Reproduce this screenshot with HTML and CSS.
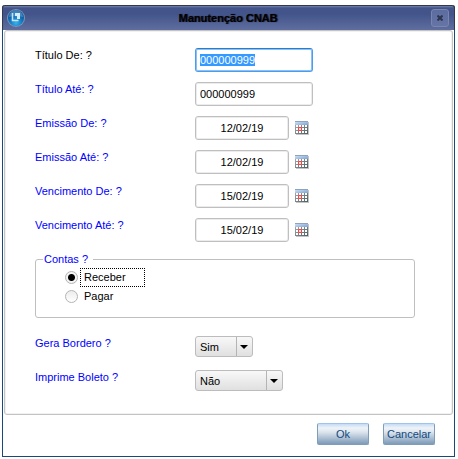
FILE: index.html
```html
<!DOCTYPE html>
<html lang="pt-BR">
<head>
<meta charset="utf-8">
<title>Manutenção CNAB</title>
<link rel="stylesheet" href="styles.css">
</head>
<body>
<svg class="defs" width="0" height="0" aria-hidden="true">
  <defs>
    <linearGradient id="cal-head" x1="0" y1="0" x2="1" y2="1">
      <stop offset="0" stop-color="#d3e6fc"/><stop offset="1" stop-color="#7fa3d0"/>
    </linearGradient>
    <linearGradient id="cal-grid" x1="0" y1="0" x2="1" y2="1">
      <stop offset="0" stop-color="#b4b4b4"/><stop offset="1" stop-color="#4a5e62"/>
    </linearGradient>
    <symbol id="calendar" viewBox="0 0 14 14">
      <path d="M1 1h13v13H1z" fill="#c4c4c4"/>
      <path d="M0 0h13v13H0z" fill="url(#cal-grid)"/>
      <path d="M0 0h13v4H0z" fill="url(#cal-head)"/>
      <path d="M0 0h13v1H0z" fill="#8fa3ba"/>
      <path d="M1 4h2v2H1zM4 4h2v2H4zM7 4h2v2H7zM10 4h2v2h-2zM1 7h2v2H1zM4 7h2v2H4zM7 7h2v2H7zM10 7h2v2h-2zM1 10h2v2H1zM4 10h2v2H4zM7 10h2v2H7zM10 10h2v2h-2z" fill="#fff"/>
      <path d="M3.500 6.500h3v3h-3z" fill="#ffe4e4" stroke="#ff4040"/>
    </symbol>
  </defs>
</svg>
<form class="window">
  <header class="titlebar">
    <svg class="logo" viewBox="0 0 18 18" aria-hidden="true">
      <defs>
        <radialGradient id="orb" cx=".5" cy=".8" r=".75">
          <stop offset="0" stop-color="#35b4ee"/><stop offset=".6" stop-color="#0f6cb4"/><stop offset="1" stop-color="#0a4c8c"/>
        </radialGradient>
      </defs>
      <circle cx="9" cy="9" r="9" fill="#7f95b8"/>
      <circle cx="9" cy="9" r="8" fill="url(#orb)"/>
      <path d="M2 8a7 7 0 0 1 14 0q-7-2-14 0z" fill="#69a7d8" opacity=".55"/>
      <path d="M5.500 4v7.500h6" fill="none" stroke="#c5e6fa" stroke-width="1.500"/>
      <path d="M8 4h5v6H8z" fill="#d4ecfb"/>
      <path d="M8 7h2v3H8z" fill="#2a83c4"/>
    </svg>
    <h1 class="title">Manutenção CNAB</h1>
    <button class="close" type="button" aria-label="Fechar">
      <svg viewBox="0 0 6 6" aria-hidden="true"><path d="M.5.5l5 5M5.500.5l-5 5" stroke="#2c3450" stroke-width="2"/></svg>
    </button>
  </header>
  <main class="panel">
    <div class="row">
      <label class="label current" for="titulo-de">Título De: ?</label>
      <input class="field" id="titulo-de" type="text" value="000000999" autofocus>
    </div>
    <div class="row">
      <label class="label" for="titulo-ate">Título Até: ?</label>
      <input class="field" id="titulo-ate" type="text" value="000000999">
    </div>
    <div class="row">
      <label class="label" for="emissao-de">Emissão De: ?</label>
      <input class="field date" id="emissao-de" type="text" value="12/02/19">
      <button class="pick" type="button" aria-label="Calendário"><svg><use href="#calendar"/></svg></button>
    </div>
    <div class="row">
      <label class="label" for="emissao-ate">Emissão Até: ?</label>
      <input class="field date" id="emissao-ate" type="text" value="12/02/19">
      <button class="pick" type="button" aria-label="Calendário"><svg><use href="#calendar"/></svg></button>
    </div>
    <div class="row">
      <label class="label" for="venc-de">Vencimento De: ?</label>
      <input class="field date" id="venc-de" type="text" value="15/02/19">
      <button class="pick" type="button" aria-label="Calendário"><svg><use href="#calendar"/></svg></button>
    </div>
    <div class="row">
      <label class="label" for="venc-ate">Vencimento Até: ?</label>
      <input class="field date" id="venc-ate" type="text" value="15/02/19">
      <button class="pick" type="button" aria-label="Calendário"><svg><use href="#calendar"/></svg></button>
    </div>
    <fieldset class="group">
      <legend>Contas ?</legend>
      <div class="option">
        <input type="radio" name="contas" id="receber" checked>
        <label class="focused" for="receber">Receber</label>
      </div>
      <div class="option">
        <input type="radio" name="contas" id="pagar">
        <label for="pagar">Pagar</label>
      </div>
    </fieldset>
    <div class="row">
      <label class="label" for="bordero">Gera Bordero ?</label>
      <span class="combo narrow"><select id="bordero"><option>Sim</option><option>Não</option></select></span>
    </div>
    <div class="row">
      <label class="label" for="boleto">Imprime Boleto ?</label>
      <span class="combo wide"><select id="boleto"><option>Não</option><option>Sim</option></select></span>
    </div>
  </main>
  <footer class="actions">
    <button class="btn" type="button">Ok</button>
    <button class="btn" type="button">Cancelar</button>
  </footer>
</form>
<script src="script.js"></script>
</body>
</html>
```
FILE: styles.css
```css
* {
  box-sizing: border-box;
}

body {
  margin: 0;
  padding: 5px 3px 2px 2px;
  min-height: 100vh;
  display: flex;
  background: #fff;
  color: #000;
  font: 11px/14px "Liberation Sans", Arial, sans-serif;
}

input,
select,
button {
  margin: 0;
  font: inherit;
  color: inherit;
}

.defs {
  position: absolute;
}

.window {
  flex: 1;
  display: flex;
  flex-direction: column;
  border: 1px solid #164a7d;
  border-top: 0;
  border-radius: 3px 3px 0 0;
}

.titlebar {
  display: flex;
  align-items: center;
  height: 25px;
  margin: 0 -1px;
  padding: 0 5px 0 4px;
  border: 1px solid #35384a;
  border-bottom: 0;
  border-radius: 3px 3px 0 0;
  background: linear-gradient(#7482ad 0, #42548a 2px, #42548a 8px, #5f6e9f 100%);
}

.logo {
  width: 18px;
  height: 18px;
}

.title {
  flex: 1;
  margin: 0;
  font-size: 11px;
  line-height: 14px;
  text-align: center;
  text-shadow: 1px 0 1px #10182f;
}

.close {
  display: flex;
  align-items: center;
  justify-content: center;
  width: 18px;
  height: 18px;
  padding: 0;
  border: 1px solid #7a86ae;
  border-radius: 3px;
  background: linear-gradient(#5c6c9f, #6574a5);
}

.close svg {
  width: 6px;
  height: 6px;
}

.panel {
  flex: 1;
  margin: 0 1px;
  padding: 17px 30px 0;
  border: 1px solid #c3c3c3;
  border-radius: 3px;
  box-shadow: inset 0 0 0 1px #f1f1f1;
}

.row {
  display: flex;
  align-items: flex-start;
  height: 34px;
}

.label {
  width: 160px;
  color: #00f;
}

.current {
  color: #000;
}

.field {
  width: 118px;
  height: 24px;
  padding: 0 4px;
  border: 1px solid #bfbfbf;
  border-radius: 3px;
  background: #fff;
  box-shadow: inset 0 0 0 1px #ececec;
}

.field:focus {
  outline: 0;
  border-color: #4a9cf0;
  border-top-color: #2a7ccc;
  box-shadow: inset 0 0 0 1px #8cc1f6;
}

.field::selection {
  background: rgba(51, 153, 255, 0.99);
  color: #fff;
}

.date {
  width: 94px;
  text-align: center;
}

.pick {
  width: 14px;
  height: 14px;
  margin: 5px 0 0 6px;
  padding: 0;
  border: 0;
  background: none;
}

.pick svg {
  display: block;
  width: 14px;
  height: 14px;
}

.group {
  height: 66px;
  margin: 0 7px 18px 0;
  padding: 2px 0 0 29px;
  border: 1px solid #bfbfbf;
  border-radius: 3px;
}

.group legend {
  margin-left: -22px;
  padding: 0 5px 0 1px;
  color: #00f;
}

.option {
  display: flex;
  align-items: center;
  gap: 2px;
  height: 19px;
}

.option input {
  appearance: none;
  width: 13px;
  height: 13px;
  border: 1px solid #b4b4b4;
  border-radius: 50%;
  background: linear-gradient(#ececec, #fff);
}

.option input:checked {
  background: radial-gradient(circle, #000 3px, #f4f4f4 4px);
}

.option label {
  width: 65px;
  height: 19px;
  padding: 1px 3px;
  border: 1px dotted transparent;
}

.option .focused {
  border-color: #000;
}

.combo {
  position: relative;
  height: 21px;
}

.narrow {
  width: 58px;
}

.wide {
  width: 88px;
}

.combo select {
  appearance: none;
  width: 100%;
  height: 21px;
  padding: 0 18px 0 4px;
  border: 1px solid #bcbcbc;
  border-radius: 3px;
  background: linear-gradient(#f8f8f8, #e0e0e0);
}

.combo::before {
  content: "";
  position: absolute;
  top: 1px;
  bottom: 1px;
  right: 16px;
  width: 1px;
  background: #b4b4b4;
}

.combo::after {
  content: "";
  position: absolute;
  top: 9px;
  right: 5px;
  border: 4px solid transparent;
  border-top-color: #000;
  border-bottom: 0;
}

.actions {
  display: flex;
  justify-content: flex-end;
  gap: 14px;
  padding: 8px 19px 11px;
}

.btn {
  width: 52px;
  height: 22px;
  padding: 0;
  border: 1px solid #7f9dba;
  border-top: 1px solid #9cc4ec;
  border-radius: 2px;
  background: linear-gradient(#c4dcf4 0, #eef3f8 4px, #dde5ed 8px, #7c9ab8 100%);
  color: #114a80;
}
```
FILE: script.js
```js
const first = document.getElementById("titulo-de");
first.focus();
first.select();
```
